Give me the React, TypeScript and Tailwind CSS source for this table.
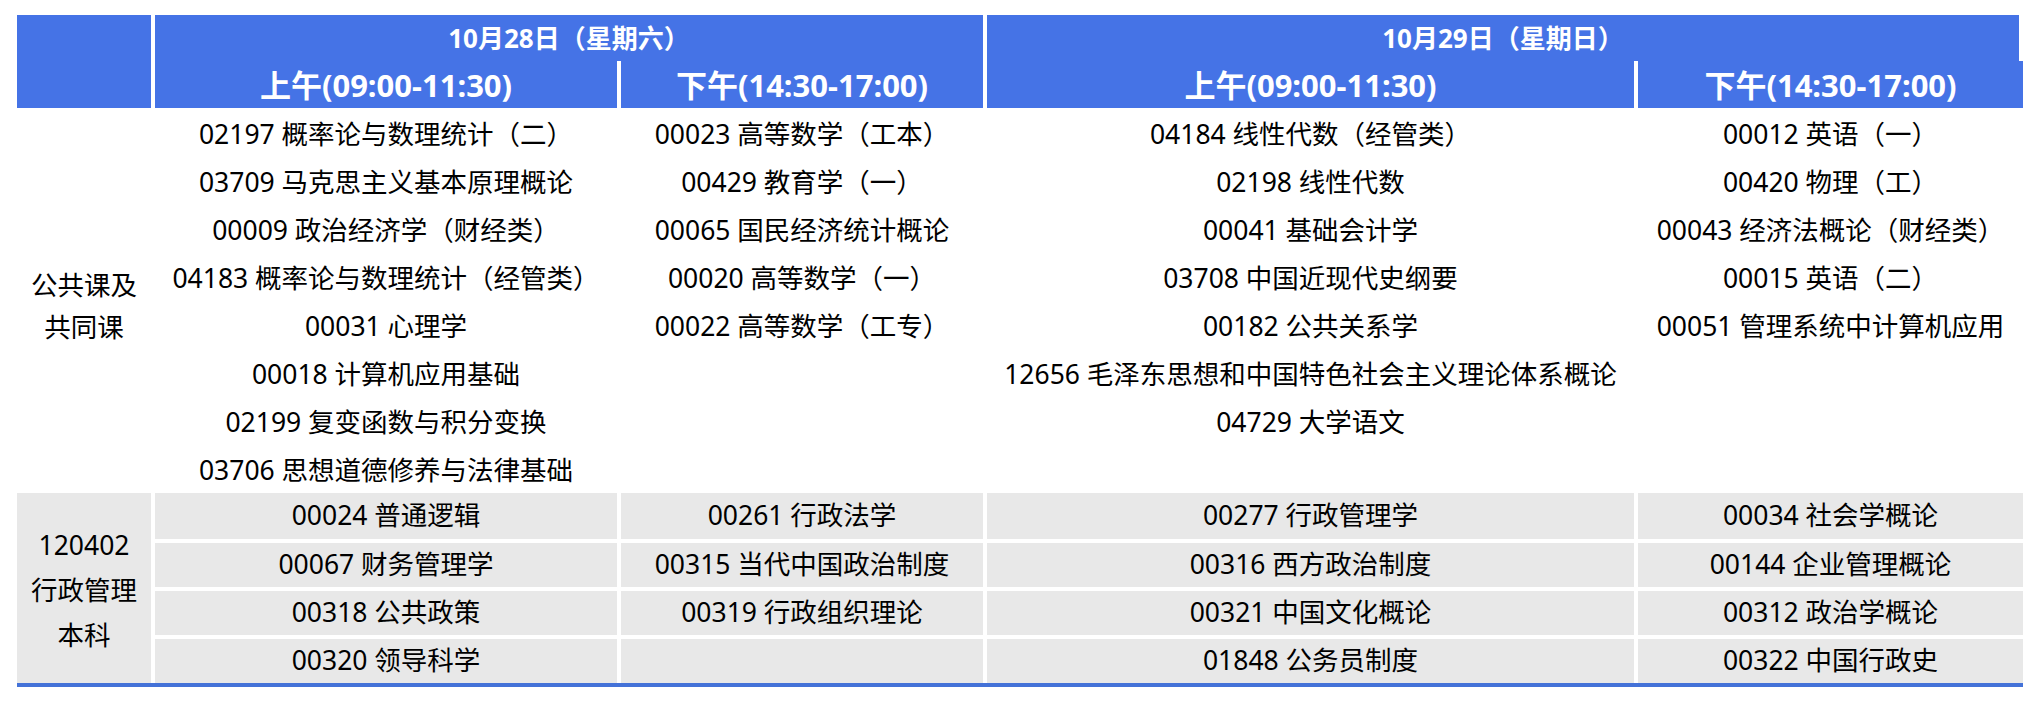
import React from "react";

const font = { fontFamily: '"Noto Sans", "Noto Sans CJK SC", sans-serif' };

const pub = [
  [
    "02197 概率论与数理统计（二）",
    "03709 马克思主义基本原理概论",
    "00009 政治经济学（财经类）",
    "04183 概率论与数理统计（经管类）",
    "00031 心理学",
    "00018 计算机应用基础",
    "02199 复变函数与积分变换",
    "03706 思想道德修养与法律基础",
  ],
  [
    "00023 高等数学（工本）",
    "00429 教育学（一）",
    "00065 国民经济统计概论",
    "00020 高等数学（一）",
    "00022 高等数学（工专）",
  ],
  [
    "04184 线性代数（经管类）",
    "02198 线性代数",
    "00041 基础会计学",
    "03708 中国近现代史纲要",
    "00182 公共关系学",
    "12656 毛泽东思想和中国特色社会主义理论体系概论",
    "04729 大学语文",
  ],
  [
    "00012 英语（一）",
    "00420 物理（工）",
    "00043 经济法概论（财经类）",
    "00015 英语（二）",
    "00051 管理系统中计算机应用",
  ],
];

// 行政管理本科, one row per line
const major = [
  ["00024 普通逻辑", "00261 行政法学", "00277 行政管理学", "00034 社会学概论"],
  ["00067 财务管理学", "00315 当代中国政治制度", "00316 西方政治制度", "00144 企业管理概论"],
  ["00318 公共政策", "00319 行政组织理论", "00321 中国文化概论", "00312 政治学概论"],
  ["00320 领导科学", "", "01848 公务员制度", "00322 中国行政史"],
];

const cols = "grid grid-cols-[134px_462px_362px_647px_385px] gap-x-[4px]";

export default function App() {
  return (
    <div className="min-h-[702px] w-[2038px] bg-white pl-[17px] pt-[15px] text-[26.5px] text-black" style={font}>
      {/* header */}
      <div className={`${cols} grid-rows-[46px_47px] text-white font-bold`}>
        <div className="row-span-2 bg-[#4573e6]" />
        <div className="col-span-2 flex items-center justify-center bg-[#4573e6] text-[26px]">
          10月28日（星期六）
        </div>
        <div className="col-span-2 mr-[4px] flex items-center justify-center bg-[#4573e6] text-[26px]">
          10月29日（星期日）
        </div>
        <div className="flex items-center justify-center bg-[#4573e6] pt-[2px] text-[31px]">上午(09:00-11:30)</div>
        <div className="flex items-center justify-center bg-[#4573e6] pt-[2px] text-[31px]">下午(14:30-17:00)</div>
        <div className="flex items-center justify-center bg-[#4573e6] pt-[2px] text-[31px]">上午(09:00-11:30)</div>
        <div className="flex items-center justify-center bg-[#4573e6] pt-[2px] text-[31px]">下午(14:30-17:00)</div>
      </div>

      {/* 公共课 */}
      <div className={`${cols} h-[381px]`}>
        <div className="flex flex-col items-center justify-center pt-[10px] leading-[42px]">
          <span>公共课及</span>
          <span>共同课</span>
        </div>
        {pub.map((list, i) => (
          <div key={i} className="flex flex-col items-center pt-[2px] leading-[48px]">
            {list.map((s) => (
              <div key={s} className="whitespace-nowrap">{s}</div>
            ))}
          </div>
        ))}
      </div>

      {/* 专业课 */}
      <div className={`${cols} mt-[4px] grid-rows-[46px_44px_44px_44px] gap-y-[4px]`}>
        <div className="row-span-4 flex flex-col items-center justify-center bg-[#e8e8e8] pt-[4px] leading-[45px]">
          <span>120402</span>
          <span>行政管理</span>
          <span>本科</span>
        </div>
        {major.map((row, r) =>
          row.map((s, c) => (
            <div key={`${r}-${c}`} className="flex items-center justify-center whitespace-nowrap bg-[#e8e8e8]">
              {s}
            </div>
          ))
        )}
      </div>
      <div className="h-[4px] w-[2006px] bg-[#4472d8]" />
    </div>
  );
}
